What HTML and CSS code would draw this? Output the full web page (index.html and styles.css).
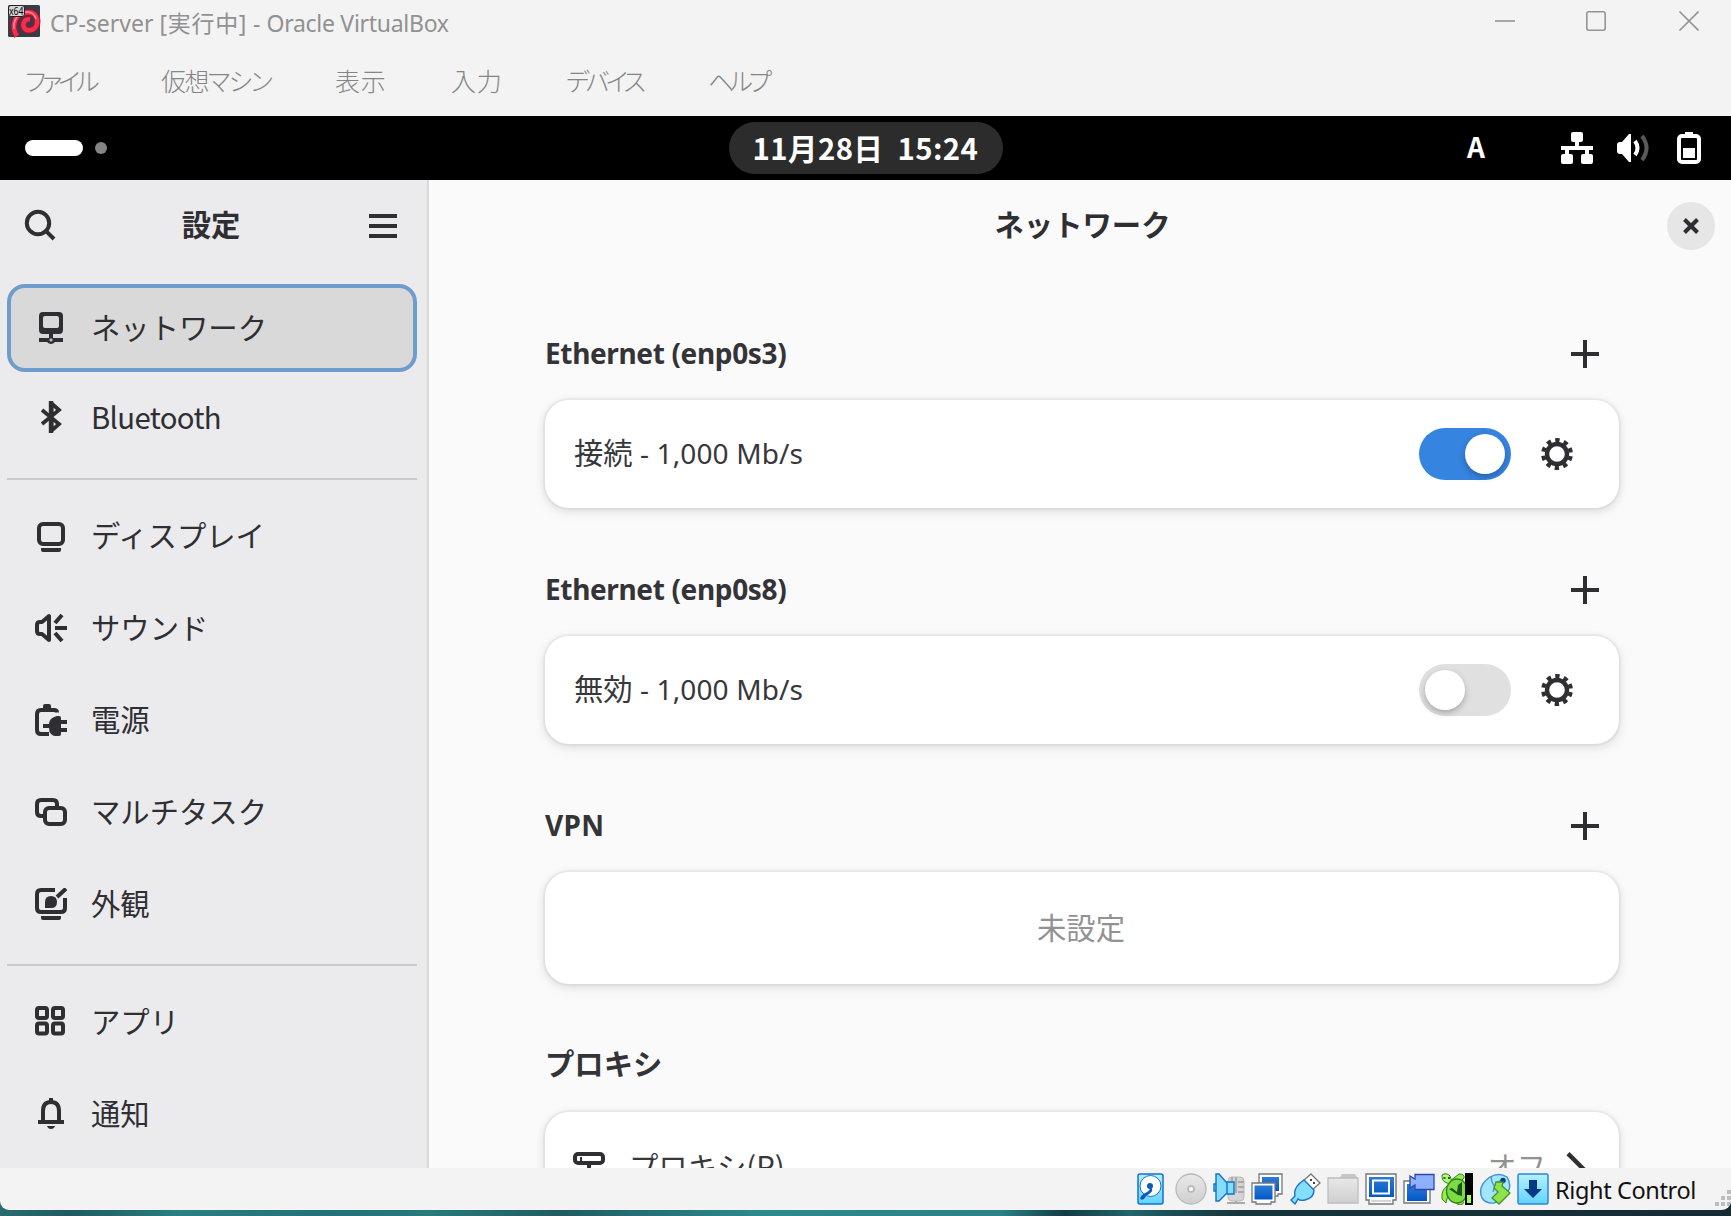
FILE: index.html
```html
<!DOCTYPE html>
<html lang="ja">
<head>
<meta charset="utf-8">
<title>CP-server [実行中] - Oracle VirtualBox</title>
<link rel="stylesheet" href="styles.css">
</head>
<body>
<div class="window">
  <header class="titlebar">
    <svg class="app-icon" viewBox="0 0 32 32">
      <rect width="32" height="32" rx="1.5" fill="#363c48"/>
      <path d="M9 31C3 22 6 9 18 7.500c8-1 12 4 11 11-1 7-10 9-13 4-2-4 1-9 6-8" fill="none" stroke="#a80f2b" stroke-width="6.500"/>
      <path d="M9 31C3 22 6 9 18 7.500c8-1 12 4 11 11-1 7-10 9-13 4-2-4 1-9 6-8" fill="none" stroke="#f0304e" stroke-width="4.500"/>
      <path d="M6 24C5 15 10 8 18 7c6-.5 9 3 10 7" fill="none" stroke="#ff8a98" stroke-width="1.500"/>
      <rect x=".5" y=".5" width="16" height="11" rx="2.500" fill="#d5d5d8" stroke="#222"/>
      <text x="1" y="10" class="badge-text" textLength="14.500" lengthAdjust="spacingAndGlyphs">x64</text>
    </svg>
    <span class="title">CP-server <span class="state">[実行中]</span> - <span class="product">Oracle VirtualBox</span></span>
    <svg class="controls" viewBox="0 0 204 20" fill="none" stroke="#949494" stroke-width="1.600">
      <path d="M0 10h20"/><rect x="91.800" y=".8" width="18.400" height="18.400" rx="2"/><path d="M184.500.5l19 19M203.500.5l-19 19"/>
    </svg>
  </header>
  <nav class="menubar">
    <span class="m1">ファイル</span><span class="m2">仮想マシン</span><span class="m3">表示</span><span class="m4">入力</span><span class="m5">デバイス</span><span class="m6">ヘルプ</span>
  </nav>

  <div class="topbar">
    <div class="workspaces"><i class="ws-active"></i><i class="ws-dot"></i></div>
    <div class="clock"><span>11月28日&nbsp; 15:24</span></div>
    <div class="tray">
      <span class="ime">A</span>
      <svg class="ic" viewBox="0 0 16 16" fill="#fff"><path d="M6 0h4q1 0 1 1v3q0 1-1 1H9v2h7v2h-2v2h1q1 0 1 1v3q0 1-1 1h-4q-1 0-1-1v-3q0-1 1-1h1V9H4v2h1q1 0 1 1v3q0 1-1 1H1q-1 0-1-1v-3q0-1 1-1h1V9H0V7h7V5H6Q5 5 5 4V1q0-1 1-1z"/></svg>
      <svg class="ic" viewBox="0 0 16 16" fill="none"><path d="M7 1v14H6L2.500 11H1.500Q0 11 0 9.500v-3Q0 5 1.500 5h1L6 1z" fill="#fff"/><path d="M9 4.500q2.500 3.500 0 7" stroke="#fff" stroke-width="2"/><path d="M12.500 2q4.500 6 0 12" stroke="#5a5a5a" stroke-width="2"/></svg>
      <svg class="ic" viewBox="0 0 16 16" fill="none"><path d="M6 0h4v2H6z" fill="#fff"/><rect x="3" y="2" width="10" height="13" rx="1.500" stroke="#fff" stroke-width="2"/><path d="M5 8h6v5H5z" fill="#fff"/></svg>
    </div>
  </div>

  <div class="desktop">
    <aside class="sidebar">
      <div class="side-head">
        <svg class="ic" viewBox="0 0 16 16" fill="none" stroke="#2f2f33" stroke-width="2"><circle cx="7" cy="7" r="5.600"/><path d="M11.300 11.300l3.700 3.700"/></svg>
        <b>設定</b>
        <svg class="burger" viewBox="0 0 28 24" fill="#2f2f33"><path d="M0 0h28v4H0zM0 10h28v4H0zM0 20h28v4H0z"/></svg>
      </div>
      <div class="list">
        <div class="item selected"><svg class="ic" viewBox="0 0 16 16"><path fill-rule="evenodd" d="M4 0h8q2 0 2 2v7q0 2-2 2H9v2h1v0h4v2H10q-1 1-2 1t-2-1H2v-2h5v-2H4q-2 0-2-2V2q0-2 2-2zM5 2Q4 2 4 3v4q0 1 1 1h6q1 0 1-1V3q0-1-1-1z"/><path d="M8 13l1 1-1 1-1-1z" fill="#bbb"/></svg><span>ネットワーク</span></div>
        <div class="item latin"><svg class="ic" viewBox="0 0 16 16" fill="none" stroke="#2f2f33" stroke-width="1.900"><path d="M3.500 4.500l8.500 7L8.300 14.800V1.200L12 4.500l-8.500 7"/><path d="M8 0v16" stroke-width="2.200"/></svg><span>Bluetooth</span></div>
        <hr>
        <div class="item"><svg class="ic" viewBox="0 0 16 16"><rect x="2" y="2" width="12" height="10" rx="2" fill="none" stroke="#2f2f33" stroke-width="2"/><path d="M3 14h10v1q0 1-1 1H4q-1 0-1-1z"/></svg><span>ディスプレイ</span></div>
        <div class="item"><svg class="ic" viewBox="0 0 16 16" fill="none" stroke="#2f2f33" stroke-width="2"><path d="M7 2v12L3.500 11H2.500Q1 11 1 9.500v-3Q1 5 2.500 5h1z" stroke-linejoin="round"/><path d="M10 5.500L13.500 1.500M10 8h6M10 10.500l3.500 4"/></svg><span>サウンド</span></div>
        <div class="item"><svg class="ic" viewBox="0 0 16 16"><path d="M11 4.300Q11 3 9.500 3H3Q1 3 1 5v8q0 2 2 2h4" fill="none" stroke="#2f2f33" stroke-width="2"/><path d="M4 1q0-1 1-1h2q1 0 1 1v2H4zM11 6h1q1 0 1 1v1h3v2h-3v2h3v2h-3v1q0 1-1 1h-2q-1 0-2-1-1-1-1-3H4v-2h3q0-3 4-4z"/></svg><span>電源</span></div>
        <div class="item"><svg class="ic" viewBox="0 0 16 16" fill="none" stroke="#2f2f33" stroke-width="2"><rect x="5" y="6" width="10" height="8" rx="2"/><path d="M4 10H3Q1 10 1 8V4q0-2 2-2h6q2 0 2 2v1"/></svg><span>マルチタスク</span></div>
        <div class="item"><svg class="ic" viewBox="0 0 16 16" fill="none" stroke="#2f2f33" stroke-width="2"><path d="M10 1H3Q1 1 1 3v7q0 2 2 2h10q2 0 2-2V5M11 4.500L15.500.3"/><path d="M5 10V7q0-3 3-3 3 0 3 3 0 3-3 3z" fill="#2f2f33" stroke="none"/><path d="M3 14h10v1q0 1-1 1H4q-1 0-1-1z" fill="#2f2f33" stroke="none"/></svg><span>外観</span></div>
        <hr>
        <div class="item"><svg class="ic" viewBox="0 0 16 16" fill="none" stroke="#2f2f33" stroke-width="2"><rect x="1" y="1" width="5" height="5" rx="1"/><rect x="9" y="1" width="5" height="5" rx="1"/><rect x="1" y="8.700" width="5" height="5" rx="1"/><rect x="9" y="8.700" width="5" height="5" rx="1"/></svg><span>アプリ</span></div>
        <div class="item"><svg class="ic" viewBox="0 0 16 16"><path d="M4 12V6.500Q4 2 8 2t4 4.500V12" fill="none" stroke="#2f2f33" stroke-width="2"/><path d="M7 0h2v2H7zM1.500 11h13v2h-13zM6 14h4q-.5 1.500-2 1.500T6 14z"/></svg><span>通知</span></div>
      </div>
    </aside>

    <main class="content">
      <div class="main-head"><b>ネットワーク</b><span class="close"><svg viewBox="0 0 16 16" stroke="#2f2f33" stroke-width="4"><path d="M1.500 1.500l13 13M14.500 1.500l-13 13"/></svg></span></div>
      <section>
        <div class="sec-head"><h2 class="eth">Ethernet (enp0s3)</h2><i class="plus"></i></div>
        <div class="card"><span class="status">接続<span class="speed"> - 1,000 Mb/s</span></span><span class="switch on"><i></i></span><svg class="ic" viewBox="0 0 16 16"><circle cx="8" cy="8" r="5" fill="none" stroke="#2f2f33" stroke-width="2.200"/><circle cx="8" cy="8" r="6.900" fill="none" stroke="#2f2f33" stroke-width="2.100" stroke-dasharray="2.200 2.135" stroke-dashoffset="-1.070"/></svg></div>
      </section>
      <section>
        <div class="sec-head"><h2 class="eth">Ethernet (enp0s8)</h2><i class="plus"></i></div>
        <div class="card"><span class="status">無効<span class="speed"> - 1,000 Mb/s</span></span><span class="switch"><i></i></span><svg class="ic" viewBox="0 0 16 16"><circle cx="8" cy="8" r="5" fill="none" stroke="#2f2f33" stroke-width="2.200"/><circle cx="8" cy="8" r="6.900" fill="none" stroke="#2f2f33" stroke-width="2.100" stroke-dasharray="2.200 2.135" stroke-dashoffset="-1.070"/></svg></div>
      </section>
      <section>
        <div class="sec-head"><h2 class="vpn">VPN</h2><i class="plus"></i></div>
        <div class="card tall empty"><span>未設定</span></div>
      </section>
      <section>
        <div class="sec-head"><h2 class="jp">プロキシ</h2></div>
        <div class="card tall proxy"><svg class="ic" viewBox="0 0 16 16"><rect x="1" y="1" width="14" height="4.500" rx="1.500" fill="none" stroke="#2f2f33" stroke-width="2"/><path d="M3.500 2.500h1v2h-1zM7 6h2v6H7zM2 12h12v2H2z"/></svg><span class="label">プロキシ(P)</span><span class="value">オフ</span><svg class="ic chev" viewBox="0 0 16 16" fill="none" stroke="#2f2f33" stroke-width="2.200"><path d="M4.500.8L11.700 8l-7.200 7.200"/></svg></div>
      </section>
    </main>
  </div>

  <footer class="statusbar">
    <div class="devices">
      <svg viewBox="0 0 32 32"><defs><linearGradient id="sky" x2="0" y2="1"><stop stop-color="#b6f1ff"/><stop offset="1" stop-color="#62d3ff"/></linearGradient><linearGradient id="navy" x2="0" y2="1"><stop stop-color="#2e7bd6"/><stop offset="1" stop-color="#0058c6"/></linearGradient><linearGradient id="grey" x2="0" y2="1"><stop stop-color="#e8e8e8"/><stop offset="1" stop-color="#cfcfcf"/></linearGradient></defs><rect x="1" y="1" width="25" height="30" rx="2" fill="url(#sky)" stroke="#1273d1" stroke-width="1.500"/><circle cx="13.500" cy="13" r="10.500" fill="#fff" stroke="#1273d1"/><circle cx="13" cy="13" r="3" fill="#0b5cb8"/><path d="M13.500 14q3.500 3 0 6-4 2-6.500 6-3 2-4-1 1-3 5-5 5-2 5.500-6z" fill="#0b5cb8"/></svg>
      <svg viewBox="0 0 32 32"><circle cx="16" cy="16" r="15" fill="url(#grey)" stroke="#b9b9b9" stroke-width="1.300"/><circle cx="16" cy="16" r="3" fill="#f3f3f3" stroke="#b5b5b5" stroke-width="1.500"/></svg>
      <svg viewBox="0 0 32 32"><rect x="15" y="4" width="16" height="24" rx="4" fill="#d4d4d4" stroke="#bbb"/><path d="M19 4v16M23 4v16M25 9h6M25 14h6M25 19h6M14 30h18M23 28v3" stroke="#aaa" stroke-width="2"/><path d="M4 1h2l8 9v10L6 28H3V1zM1 11h2v7H1zM14 9h7v12h-7z" fill="#84dcff" stroke="#1570cc" stroke-width="1.400"/></svg>
      <svg viewBox="0 0 32 32"><path d="M8 1h23v20h-4v2H8z" fill="#fff" stroke="#777" stroke-width="1.300"/><path d="M11 4h17v14H11z" fill="url(#navy)"/><path d="M1 10h23v19h-4v2H5v-2H1z" fill="#fff" stroke="#777" stroke-width="1.300"/><path d="M3.500 12.500h18v14h-18z" fill="url(#navy)"/></svg>
      <svg viewBox="0 0 32 32"><path d="M22 1l9 9-8 7-9-9z" fill="#fff" stroke="#777" stroke-width="1.300"/><path d="M21 6h2v2h-2zM24 9h2v2h-2z" fill="#444"/><path d="M15 7l10 10q0 8-9 10-5 1-7-1l-3 5-4-4 4-4q-2-9 9-16z" fill="#83deff" stroke="#1972c9" stroke-width="1.400"/></svg>
      <svg viewBox="0 0 32 32"><path d="M12 6l3-5h13l3 5z" fill="#c6c6c6"/><path d="M1 5h30v25H1z" fill="url(#grey)" stroke="#bdbdbd" stroke-width="1.300"/></svg>
      <svg viewBox="0 0 32 32"><path d="M1 1h30v26h-3v4H4v-4H1z" fill="#fff" stroke="#777" stroke-width="1.400"/><path d="M4 4h25v20H4z" fill="url(#navy)"/><path d="M8 7.500h16v13H8z" fill="none" stroke="#fff" stroke-width="2"/><path d="M6 28h20" stroke="#aaa"/></svg>
      <svg viewBox="0 0 32 32"><path d="M1 8h26v22H1z" fill="#fff" stroke="#777" stroke-width="1.400"/><path d="M4 11h20v17H4z" fill="url(#navy)"/><path d="M7 3l5 3V1.500h19v15H12V12l-5 3z" fill="#8fb0ff" stroke="#2947b5" stroke-width="1.300"/></svg>
      <svg viewBox="0 0 32 32"><path d="M9 8L18 1q6 0 5 4l-3 3M6 13Q0 17 1 26l4 4 2-8M15 29q1 3 4 3t4-3" fill="#91ee52" stroke="#39821b"/><path d="M1 2q4-3 8 1l2 6q-4 3-7 0Q1 8 1 2z" fill="#b0f581" stroke="#39821b"/><path d="M2.500 4h2v2h-2zM7 4h2v2H7z" fill="#263"/><ellipse cx="16" cy="18" rx="10.500" ry="12" fill="#7bdc43" stroke="#39821b" stroke-width="1.300"/><path d="M8 16l3-1 5 4 1-7 4-3v14l-4-1z" fill="#1c541b"/><path d="M24 0h8v32h-8z"/><path d="M26 22h4v8h-4z" fill="#a4ff3d"/></svg>
      <svg viewBox="0 0 32 32"><path d="M11 4Q20-1 28 4q5 8 1 15-5 9-14 11-8 1-12-5-5-12 8-21z" fill="#a2e5ff" stroke="#3d91d0" stroke-width="1.400"/><path d="M12 4q1 8 6 12M24 7q-8 2-10 12" fill="none" stroke="#3d91d0" stroke-width="1.300"/><circle cx="24" cy="7.500" r="2.700" fill="#073c82"/><path d="M17 9h7l-1 4 8 7-11 11-7-6 6-6-4-4z" fill="#8ee34b" stroke="#489129" stroke-width="1.300"/></svg>
      <svg viewBox="0 0 32 32"><rect x="1" y="1" width="30" height="30" rx="1.500" fill="url(#sky)" stroke="#2b87d3" stroke-width="1.500"/><path d="M12 7h8v9h5l-9 9-9-9h5z" fill="#003a83"/></svg>
    </div>
    <span class="hostkey">Right Control</span>
    <svg class="grip" viewBox="0 0 16 16" fill="#bdbdbd"><path d="M12 0h4v4h-4zM6 6h4v4H6zM12 6h4v4h-4zM0 12h4v4H0zM6 12h4v4H6zM12 12h4v4h-4z"/></svg>
  </footer>
</div>
</body>
</html>
```
FILE: styles.css
```css
* { box-sizing: border-box; }
body {
  margin: 0;
  width: 1731px;
  height: 1216px;
  overflow: hidden;
  background: linear-gradient(90deg, #2a6b70 0, #1f5a62 70px, #2a7f80 180px, #237078 330px, #287a7b 430px, #205b62 560px, #2c8a8c 760px, #2c8086 1000px, #123b42 1065px, #24646a 1130px, #1b4e57 1170px, #17343b 1240px, #152c34 1731px);
  font-family: "Noto Sans CJK JP", sans-serif;
  color: #2f2f33;
}
.window {
  width: 1731px;
  height: 1210px;
  background: #f3f3f3;
  border-radius: 0 0 9px 9px;
  overflow: hidden;
  display: flex;
  flex-direction: column;
}
.titlebar {
  height: 44px;
  padding: 0 32px 2px 8px;
  display: flex;
  align-items: center;
}
.app-icon { width: 32px; height: 32px; overflow: visible; }
.badge-text { font: 10px "Noto Sans", sans-serif; fill: #000; }
.title {
  margin-left: 10px;
  flex: 1;
  font: 23px/32px "Noto Sans", "Noto Sans CJK JP", sans-serif;
  color: #919191;
  white-space: nowrap;
  padding-top: 3px;
}
.state { letter-spacing: .7px; }
.product { letter-spacing: -.28px; }
.controls { width: 204px; height: 20px; }
.menubar {
  height: 72px;
  display: flex;
  align-items: center;
  padding: 0 0 1px 25px;
  font-size: 25px;
  font-weight: 300;
  line-height: 36px;
  color: #858585;
  white-space: nowrap;
  font-feature-settings: "palt";
}
.m1 { width: 136px; letter-spacing: -4px; }
.m2 { width: 174px; letter-spacing: -1.500px; }
.m3 { width: 116px; letter-spacing: .8px; }
.m4 { width: 115px; letter-spacing: .8px; }
.m5 { width: 142px; letter-spacing: -3.600px; }
.m6 { letter-spacing: -4px; }

.topbar {
  height: 64px;
  background: #000;
  display: grid;
  grid-template-columns: 1fr 274px 1fr;
  align-items: center;
  color: #fff;
}
.workspaces { display: flex; align-items: center; gap: 12px; padding-left: 25px; }
.ws-active { width: 58px; height: 16px; border-radius: 8px; background: #fff; }
.ws-dot { width: 12px; height: 12px; border-radius: 50%; background: #858585; }
.clock {
  height: 52px;
  border-radius: 26px;
  background: #2c2c2c;
  display: flex;
  align-items: center;
  justify-content: center;
  font-weight: 700;
  font-size: 29.330px;
  line-height: 44px;
  letter-spacing: .45px;
  padding-bottom: 3px;
  white-space: nowrap;
}
.tray { display: flex; align-items: center; justify-content: flex-end; gap: 24px; padding-right: 26px; }
.ime { font-size: 28px; font-weight: 700; line-height: 40px; margin: 0 52px 4px 0; }
.ic { width: 32px; height: 32px; flex: none; display: block; }

.desktop { height: 988px; display: flex; overflow: hidden; }
.sidebar { width: 429px; background: #ebebed; border-right: 2px solid #d9d9da; }
.sidebar .ic, .card .ic { fill: #2f2f33; }
.side-head { height: 92px; padding: 0 30px 0 24px; display: flex; align-items: center; justify-content: space-between; font-size: 29.330px; line-height: 44px; }
.side-head .ic { fill: none; margin-top: -2px; }
.side-head b { margin: 0 3px 6px 0; }
.burger { width: 28px; height: 24px; }
.list { padding: 12px 10px 0 7px; display: flex; flex-direction: column; gap: 4px; }
.item {
  height: 88px;
  padding-left: 28px;
  display: flex;
  align-items: center;
  gap: 24px;
  font-size: 29.330px;
  line-height: 44px;
  white-space: nowrap;
}
.item span { margin-bottom: 5px; }
.item.selected { background: #d9d9d9; border: 4px solid #6f9dcb; border-radius: 18px; padding-left: 24px; }
.item.latin { height: 84px; padding-bottom: 2px; }
.latin span { letter-spacing: -.65px; margin-bottom: 3px; }
.item[class="item"] .ic[fill="none"], .latin .ic { fill: none; }
.list hr { width: 100%; height: 2px; border: 0; background: #cbcbcd; margin: 12px 0 8px; }
.latin + hr { margin-top: 14px; }

.content { flex: 1; background: #fafafa; }
.main-head { height: 92px; padding: 0 16px 0 0; display: flex; align-items: center; font-size: 29.330px; line-height: 44px; }
.main-head b { flex: 1; text-align: center; padding-left: 69px; margin-bottom: 6px; }
.close { width: 48px; height: 48px; border-radius: 50%; background: #e6e6e6; display: grid; place-items: center; }
.close svg { width: 16px; height: 16px; }
section { width: 1074px; margin: 62px 0 0 116px; }
.sec-head { height: 40px; display: flex; align-items: center; justify-content: space-between; padding-right: 20px; margin-bottom: 26px; }
h2 { margin: 0 0 3px; font: 700 28px/40px "Noto Sans", sans-serif; color: #333338; white-space: nowrap; }
.eth { letter-spacing: -.35px; }
.vpn { letter-spacing: .3px; }
h2.jp { font: 700 29.330px/40px "Noto Sans CJK JP", sans-serif; margin-bottom: 8px; }
.plus {
  width: 28px;
  height: 28px;
  background: linear-gradient(#2f2f33, #2f2f33) center / 28px 4px no-repeat, linear-gradient(#2f2f33, #2f2f33) center / 4px 28px no-repeat;
}
.card {
  height: 108px;
  border-radius: 24px;
  background: #fff;
  box-shadow: 0 0 0 2px rgba(0,0,0,.03), 0 2px 6px 2px rgba(0,0,0,.07), 0 4px 12px 4px rgba(0,0,0,.03);
  padding: 0 46px 0 29px;
  display: flex;
  align-items: center;
  font-size: 29.330px;
  line-height: 44px;
  color: #38383c;
  white-space: nowrap;
}
.status { flex: 1; margin-bottom: 5px; }
.speed { font-family: "Noto Sans", sans-serif; font-size: 28px; white-space: pre; letter-spacing: .12px; }
.switch { width: 92px; height: 52px; border-radius: 26px; background: #e0e0e0; padding: 6px; margin-right: 30px; display: flex; }
.switch.on { background: #3584e0; justify-content: flex-end; }
.switch i { width: 40px; height: 40px; border-radius: 50%; background: #fff; box-shadow: 0 3px 6px rgba(0,0,0,.25); }
.tall { height: 112px; }
.empty { justify-content: center; color: #929294; padding: 0 2px 5px 0; }
.proxy { padding: 0 28px; }
.label { margin: 0 0 6px 24px; flex: 1; }
.value { color: #929294; margin: 0 13px 6px 0; }
.proxy .chev { fill: none; }

.statusbar { height: 42px; display: flex; align-items: center; padding-left: 1137px; position: relative; }
.devices { display: flex; gap: 6px; }
.devices svg { width: 32px; height: 32px; display: block; }
.hostkey { font: 23.500px/34px "Noto Sans", sans-serif; letter-spacing: -.38px; color: #111; margin: 2px 0 0 6px; white-space: nowrap; }
.grip { position: absolute; right: 0; bottom: 4px; width: 16px; height: 16px; }
```
